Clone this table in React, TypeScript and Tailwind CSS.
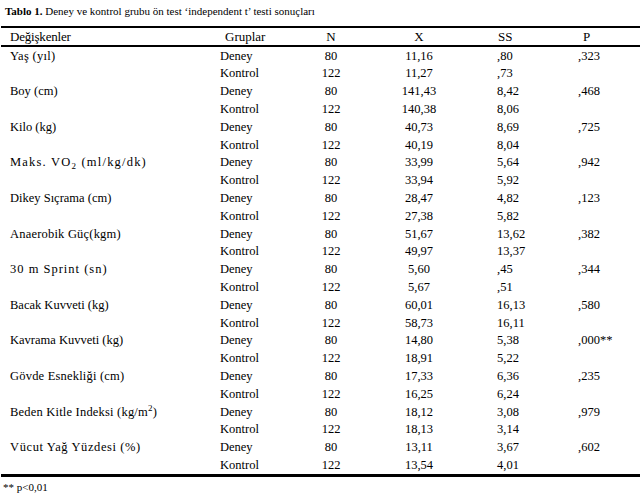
import React from "react";

type Row = {
  name: React.ReactNode;
  track?: string;
  deney: [string, string, string];
  kontrol: [string, string, string];
  p: string;
};

const rows: Row[] = [
  { name: "Yaş (yıl)", track: "tracking-[0.3px]", deney: ["80", "11,16", ",80"], kontrol: ["122", "11,27", ",73"], p: ",323" },
  { name: "Boy (cm)", deney: ["80", "141,43", "8,42"], kontrol: ["122", "140,38", "8,06"], p: ",468" },
  { name: "Kilo (kg)", deney: ["80", "40,73", "8,69"], kontrol: ["122", "40,19", "8,04"], p: ",725" },
  {
    name: (
      <>
        Maks. VO<sub className="text-[9px]">2</sub> (ml/kg/dk)
      </>
    ),
    track: "tracking-[1.2px]",
    deney: ["80", "33,99", "5,64"],
    kontrol: ["122", "33,94", "5,92"],
    p: ",942",
  },
  { name: "Dikey Sıçrama (cm)", deney: ["80", "28,47", "4,82"], kontrol: ["122", "27,38", "5,82"], p: ",123" },
  { name: "Anaerobik Güç(kgm)", track: "tracking-[0.2px]", deney: ["80", "51,67", "13,62"], kontrol: ["122", "49,97", "13,37"], p: ",382" },
  { name: "30 m Sprint (sn)", track: "tracking-[1px]", deney: ["80", "5,60", ",45"], kontrol: ["122", "5,67", ",51"], p: ",344" },
  { name: "Bacak Kuvveti (kg)", deney: ["80", "60,01", "16,13"], kontrol: ["122", "58,73", "16,11"], p: ",580" },
  { name: "Kavrama Kuvveti (kg)", deney: ["80", "14,80", "5,38"], kontrol: ["122", "18,91", "5,22"], p: ",000**" },
  { name: "Gövde Esnekliği (cm)", track: "tracking-[0.2px]", deney: ["80", "17,33", "6,36"], kontrol: ["122", "16,25", "6,24"], p: ",235" },
  {
    name: (
      <>
        Beden Kitle Indeksi (kg/m<sup className="text-[9px]">2</sup>)
      </>
    ),
    track: "tracking-[0.2px]",
    deney: ["80", "18,12", "3,08"],
    kontrol: ["122", "18,13", "3,14"],
    p: ",979",
  },
  { name: "Vücut Yağ Yüzdesi (%)", track: "tracking-[0.6px]", deney: ["80", "13,11", "3,67"], kontrol: ["122", "13,54", "4,01"], p: ",602" },
];

const cols = "grid grid-cols-[220px_80px_62px_114px_84px_1fr] items-center";

const DataRow = ({
  name,
  track = "",
  group,
  vals,
  p,
}: {
  name?: React.ReactNode;
  track?: string;
  group: string;
  vals: string[];
  p?: string;
}) => (
  <div className={`${cols} h-[17.8px] text-[12.5px] leading-none`}>
    <div className={`pl-[10px] whitespace-nowrap ${track}`}>{name}</div>
    <div>{group}</div>
    <div className="text-center">{vals[0]}</div>
    <div className="text-center">{vals[1]}</div>
    <div className="pl-[21px]">{vals[2]}</div>
    <div className="pl-[18px] whitespace-nowrap">{p}</div>
  </div>
);

export default function App() {
  return (
    <div className="w-[641px] h-[497px] bg-white text-black font-['Liberation_Serif',serif] overflow-hidden">
      <div className="h-[26px] pl-[5px] pt-[4px] text-[11px] leading-[14px] whitespace-nowrap">
        <span className="font-bold">Tablo 1.</span> Deney ve kontrol grubu ön test ‘independent t’ testi sonuçları
      </div>
      <div className="mx-[1px] h-[2px] bg-black" />
      <div className={`${cols} h-[17px] text-[13px] leading-none`}>
        <div className="pl-[10px] tracking-[-0.2px]">Değişkenler</div>
        <div className="pl-[5px]">Gruplar</div>
        <div className="text-center">N</div>
        <div className="text-center">X</div>
        <div className="pl-[22px]">SS</div>
        <div className="pl-[23px]">P</div>
      </div>
      <div className="mx-[1px] h-[2px] bg-black" />
      <div>
        {rows.map((r, i) => (
          <React.Fragment key={i}>
            <DataRow name={r.name} track={r.track} group="Deney" vals={r.deney} p={r.p} />
            <DataRow group="Kontrol" vals={r.kontrol} />
          </React.Fragment>
        ))}
      </div>
      <div className="mx-[1px] h-[2.5px] bg-black" />
      <div className="pl-[3px] pt-[5px] text-[11px] leading-none">** p&lt;0,01</div>
    </div>
  );
}
